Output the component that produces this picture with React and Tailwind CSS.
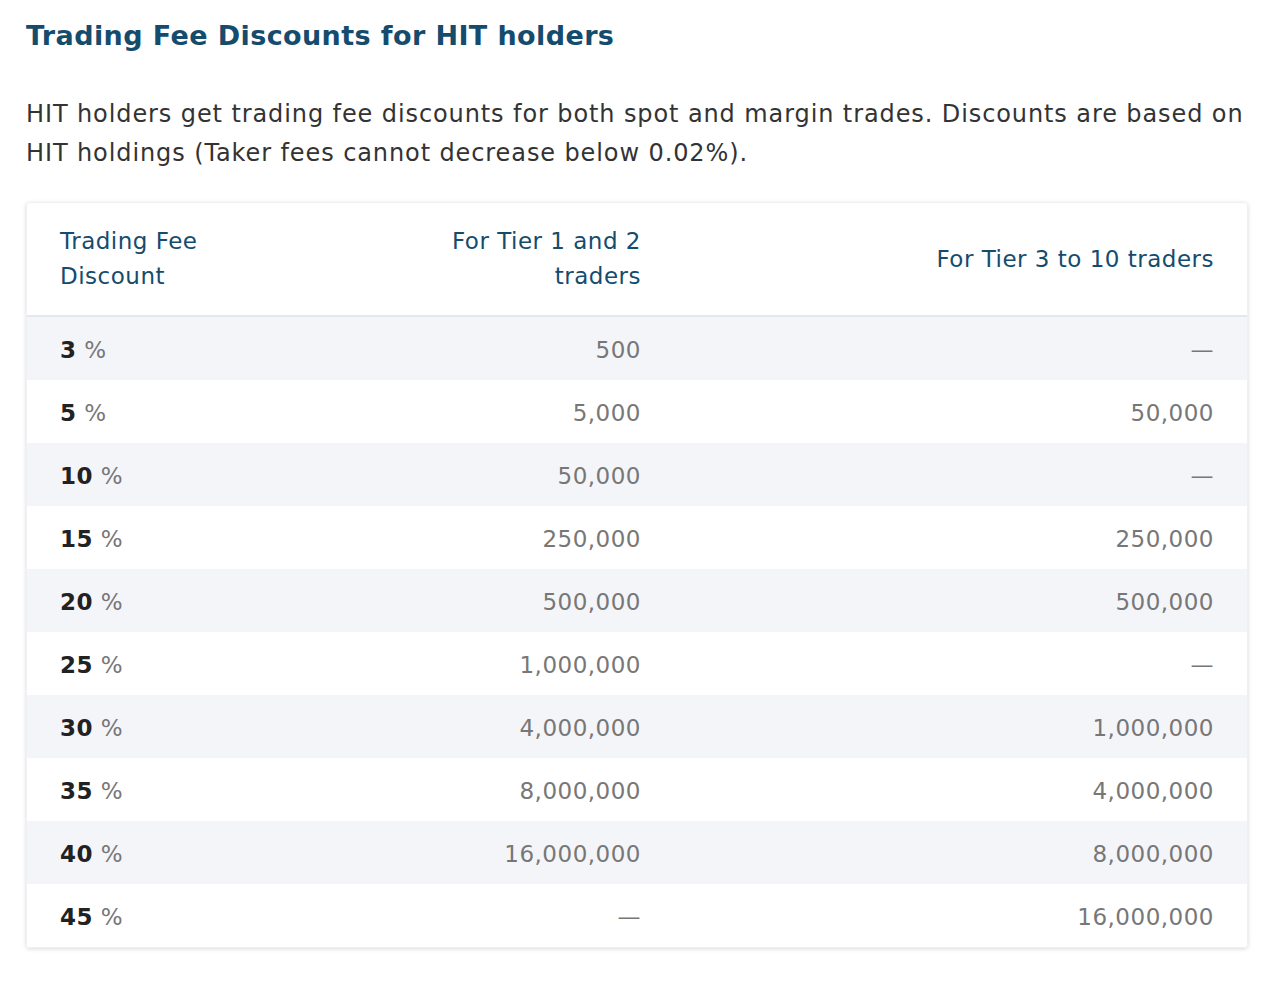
export default function App() {
  const rows = [
    ["3", "500", "—"],
    ["5", "5,000", "50,000"],
    ["10", "50,000", "—"],
    ["15", "250,000", "250,000"],
    ["20", "500,000", "500,000"],
    ["25", "1,000,000", "—"],
    ["30", "4,000,000", "1,000,000"],
    ["35", "8,000,000", "4,000,000"],
    ["40", "16,000,000", "8,000,000"],
    ["45", "—", "16,000,000"],
  ];
  return (
    <div className="bg-white w-[1280px] h-[988px] pl-[26px] pr-[32px] pt-[17px]" style={{ fontFamily: '"DejaVu Sans", Verdana, sans-serif' }}>
      <h1 className="text-[27px] tracking-[0.4px] font-bold text-[#154c6d] leading-[38px]">Trading Fee Discounts for HIT holders</h1>
      <p className="mt-[40px] text-[24px] tracking-[0.9px] leading-[39px] text-[#333] whitespace-nowrap">
        HIT holders get trading fee discounts for both spot and margin trades. Discounts are based on<br />
        HIT holdings (Taker fees cannot decrease below 0.02%).
      </p>
      <div className="mt-[29px] rounded-[4px] shadow-[0_1px_4px_rgba(0,0,0,0.15)] border border-[#eef0f3] overflow-hidden">
        <div className="flex h-[114px] items-center border-b-2 border-[#e4e7ec] text-[23px] tracking-[0.5px] leading-[35px] text-[#154c6d]">
          <div className="w-[380px] pl-[33px]">Trading Fee<br />Discount</div>
          <div className="w-[268px] text-right pr-[34px]">For Tier 1 and 2<br />traders</div>
          <div className="flex-1 text-right pr-[33px]">For Tier 3 to 10 traders</div>
        </div>
        {rows.map((r, i) => (
          <div key={i} className={`flex h-[63px] items-center pt-[4px] text-[23px] tracking-[0.5px] ${i % 2 === 0 ? "bg-[#f4f5f9]" : "bg-white"}`}>
            <div className="w-[380px] pl-[33px]"><span className="font-bold text-[#222]">{r[0]}</span> <span className="text-[#777]">%</span></div>
            <div className="w-[268px] text-right pr-[34px] text-[#777]">{r[1]}</div>
            <div className="flex-1 text-right pr-[33px] text-[#777]">{r[2]}</div>
          </div>
        ))}
      </div>
    </div>
  );
}
